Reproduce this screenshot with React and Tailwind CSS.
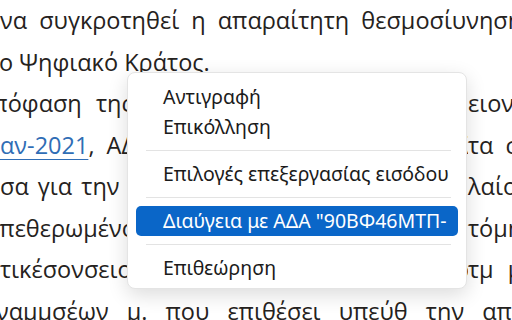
import React from 'react';

const bodyFont = { fontFamily: '"Open Sans", "Noto Sans", sans-serif' };

// one line of the document; `left` runs under the menu, `right` peeks out past it
function DocLine({ left, right, shift = '', className = '' }) {
  return (
    <div className={`h-[41.5px] leading-[41.5px] whitespace-nowrap flex ${className}`}>
      <span className={`shrink-0 overflow-hidden ${right ? 'w-[468px]' : ''}`}>
        <span className={`inline-block ${shift}`}>{left}</span>
      </span>
      {right && <span>{right}</span>}
    </div>
  );
}

function MenuItem({ label, active }) {
  return (
    <div
      className={`h-[30px] mx-[8px] pl-[27px] flex items-center rounded-[5px] whitespace-nowrap overflow-hidden ${
        active ? 'bg-[#0a66c8] text-white' : 'text-[#1b1b1b]'
      }`}
    >
      {label}
    </div>
  );
}

function Separator() {
  return <div className="h-px bg-[#e3e3e3] my-[8px] ml-[18px] mr-[15px]" />;
}

export default function App() {
  return (
    <div
      className="relative w-[512px] h-[320px] overflow-hidden bg-white text-[#252220] text-[23.5px]"
      style={bodyFont}
    >
      {/* document text behind the menu */}
      <div className="flex flex-col">
        <DocLine className="[word-spacing:6px]" left="να συγκροτηθεί η απαραίτητη θεσμοσίυνηση" />
        <DocLine shift="-ml-[1px]" left="ο Ψηφιακό Κράτος." />
        <DocLine
          shift="-ml-[22px]"
          className="[word-spacing:8px]"
          left="απόφαση της Επιτροπής του Υπουργείου και του Ταμ"
          right="ειον του"
        />
        <DocLine
          className="[word-spacing:6px]"
          left={
            <>
              <span className="text-[#2f6db5] underline underline-offset-[5px] decoration-1">αν-2021</span>
              <span>, ΑΔΑ του Κυβερνητικού Συμβουλίου και με</span>
            </>
          }
          right="τα σχετικά"
        />
        <DocLine
          className="[word-spacing:3px]"
          left="σα για την εφαρμογή των διατάξεων της νομοθεσίας και"
          right="λαίοι"
        />
        <DocLine
          shift="-ml-[15px]"
          className="[word-spacing:8px]"
          left="απεθερωμένου του δημοσίου τομέα και του ιδιωτικού"
          right="τόμης"
        />
        <DocLine
          className="[word-spacing:8px]"
          left="τικέσονσειο που στεγμένη τα εκστη απο την"
          right="τμ με"
        />
        <DocLine shift="-ml-[4px]" className="[word-spacing:12px]" left="ναμμσέων μ. που επιθέσει υπεύθ την απείδη" />
      </div>

      {/* context menu overlay */}
      <div
        className="absolute left-[127px] top-[72px] w-[340px] h-[217px] bg-white rounded-[8px] border border-[#e4e4e4] shadow-[0_6px_20px_rgba(0,0,0,0.14)] pt-[9px] text-[19.5px]"
        style={{ fontFamily: '"Noto Sans", "Open Sans", sans-serif' }}
      >
        <MenuItem label="Αντιγραφή" />
        <MenuItem label="Επικόλληση" />
        <Separator />
        <MenuItem label="Επιλογές επεξεργασίας εισόδου" />
        <Separator />
        <MenuItem label={'Διαύγεια με ΑΔΑ "90ΒΦ46ΜΤΠ-'} active />
        <Separator />
        <MenuItem label="Επιθεώρηση" />
      </div>
    </div>
  );
}
